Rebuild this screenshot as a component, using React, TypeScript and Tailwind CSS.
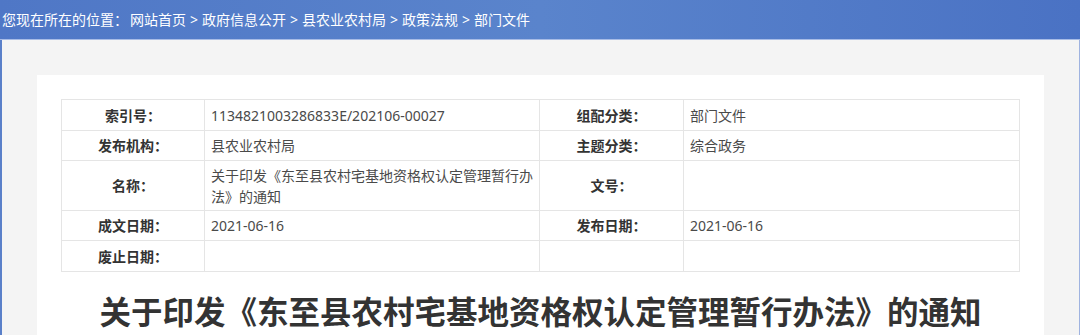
const font = { fontFamily: '"Noto Sans", "Noto Sans CJK SC", sans-serif' };

const rows: { h: string; cells: [string, string, string, string] }[] = [
  { h: "h-[31px]", cells: ["索引号：", "1134821003286833E/202106-00027", "组配分类：", "部门文件"] },
  { h: "h-[30px]", cells: ["发布机构：", "县农业农村局", "主题分类：", "综合政务"] },
  { h: "h-[50px]", cells: ["名称：", "关于印发《东至县农村宅基地资格权认定管理暂行办法》的通知", "文号：", ""] },
  { h: "h-[30px]", cells: ["成文日期：", "2021-06-16", "发布日期：", "2021-06-16"] },
  { h: "h-[31px]", cells: ["废止日期：", "", "", ""] },
];

const crumbs = ["网站首页", "政府信息公开", "县农业农村局", "政策法规", "部门文件"];

export default function App() {
  return (
    <div className="w-[1080px] h-[335px] overflow-hidden bg-[#f4f4f4] flex flex-col" style={font}>
      <div className="h-[40px] shrink-0 border-b border-[#a8bce6] bg-linear-to-r from-[#4f77c6] via-[#5a84cc] to-[#4a72c4] flex items-center pl-[2px] text-[14px] text-white whitespace-nowrap">
        <span>您现在所在的位置：</span>
        <span className="ml-[2px]">
          {crumbs.map((c, i) => (
            <span key={c}>
              {i > 0 && <span className="mx-[4px]">&gt;</span>}
              {c}
            </span>
          ))}
        </span>
      </div>

      <div className="flex-1 flex border-l-2 border-l-[#5a80c9] border-r border-r-[#9fb3e0] pt-[35px] px-[35px]">
        <div className="flex-1 min-w-0 bg-white pt-[24px] px-[24px]">
          <table className="w-full border-collapse text-[14px] table-fixed">
            <colgroup>
              <col className="w-[143px]" />
              <col className="w-[335px]" />
              <col className="w-[144px]" />
              <col />
            </colgroup>
            <tbody>
              {rows.map((r) => (
                <tr key={r.cells[0]} className={r.h}>
                  {r.cells.map((c, i) => (
                    <td
                      key={i}
                      className={
                        "border border-[#e5e5e5] leading-[21px] " +
                        (i % 2 === 0
                          ? "text-center font-bold text-[#333]"
                          : "text-left px-[6px] text-[#4a4a4a]")
                      }
                    >
                      {c}
                    </td>
                  ))}
                </tr>
              ))}
            </tbody>
          </table>

          <h1 className="mt-[19px] text-center text-[31.5px] font-bold text-[#333] leading-[42px] whitespace-nowrap">
            关于印发《东至县农村宅基地资格权认定管理暂行办法》的通知
          </h1>
        </div>
      </div>
    </div>
  );
}
